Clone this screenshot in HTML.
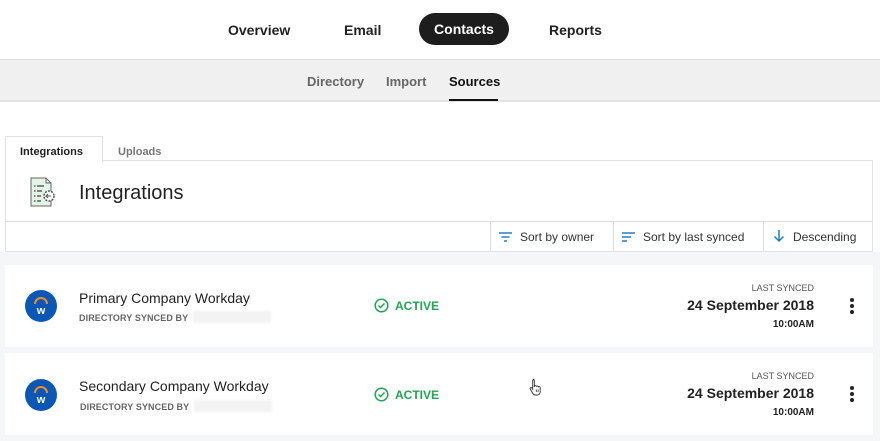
<!DOCTYPE html>
<html><head><meta charset="utf-8"><style>
*{margin:0;padding:0;box-sizing:border-box}
body{width:880px;height:441px;overflow:hidden;background:#f4f6f7;font-family:"Liberation Sans",sans-serif;color:#222;position:relative}
.abs{position:absolute}
.top{left:0;top:0;width:880px;height:60px;background:#fff;border-bottom:1px solid #ddd}
.nav{font-weight:bold;font-size:14px;top:22px}
.pill{left:419px;top:13px;width:90px;height:32px;border-radius:16px;background:#1d1d1d;color:#fff;font-weight:bold;font-size:14px;text-align:center;line-height:32px}
.sub{left:0;top:60px;width:880px;height:42px;background:#f0f0f1;border-bottom:2px solid #e3e3e3}
.sn{top:74px;font-weight:bold;font-size:13px;color:#666}
.white{left:0;top:102px;width:880px;height:150px;background:#fff}
.tab{font-size:11px;font-weight:bold;top:146px}
.panel{left:5px;top:160px;width:868px;height:92px;background:#fff;border:1px solid #e2e2e2;border-top:none}
.tb{font-size:12px;color:#333;top:230px}
.div{top:222px;width:1px;height:29px;background:#ddd}
.row{left:5px;width:868px;height:82px;background:#fff}
.logo{width:32px;height:32px;border-radius:50%;background:#0b57b8}
.name{font-size:14px;color:#222}
.by{font-size:9px;color:#666;font-weight:bold;letter-spacing:0.1px}
.blur{width:78px;height:12px;background:#f3f3f3;filter:blur(1px)}
.act{color:#1fa652;font-weight:bold;font-size:12px}
.ls{font-size:9px;color:#555;right:66px;text-align:right}
.dt{font-size:14px;font-weight:bold;right:66px;text-align:right}
.tm{font-size:10px;font-weight:bold;right:66px;text-align:right}
.dots{width:4px}
.dots i{display:block;width:4px;height:4px;border-radius:2px;background:#222;margin-bottom:2px}
</style></head><body>
<div class="abs top"></div>
<div class="abs nav" style="left:228px">Overview</div>
<div class="abs nav" style="left:344px">Email</div>
<div class="abs pill">Contacts</div>
<div class="abs nav" style="left:549px">Reports</div>
<div class="abs sub"></div>
<div class="abs sn" style="left:307px">Directory</div>
<div class="abs sn" style="left:386px">Import</div>
<div class="abs sn" style="left:449px;color:#111">Sources</div>
<div class="abs" style="left:449px;top:99px;width:49px;height:2px;background:#111"></div>
<div class="abs white"></div>
<div class="abs" style="left:5px;top:136px;width:98px;height:26px;background:#fff;border:1px solid #e2e2e2;border-bottom:none;z-index:2"></div>
<div class="abs tab" style="left:20px;z-index:3">Integrations</div>
<div class="abs tab" style="left:118px;color:#777">Uploads</div>
<div class="abs panel"></div>
<div class="abs" style="left:5px;top:160px;width:868px;height:1px;background:#e2e2e2"></div>
<svg class="abs" style="left:29px;top:176px" width="28" height="32" viewBox="0 0 28 32">
<path d="M2 2h15l5 5v23H2z" fill="#e3f3e6" stroke="#666" stroke-width="1"/>
<path d="M17 2v5h5" fill="none" stroke="#666"/>
<g stroke="#555" stroke-width="1.4"><line x1="5" y1="10" x2="6.5" y2="10"/><line x1="8" y1="10" x2="15" y2="10"/><line x1="5" y1="15" x2="6.5" y2="15"/><line x1="8" y1="15" x2="13" y2="15"/><line x1="5" y1="20" x2="6.5" y2="20"/><line x1="8" y1="20" x2="12" y2="20"/><line x1="5" y1="25" x2="6.5" y2="25"/><line x1="8" y1="25" x2="12" y2="25"/></g>
<circle cx="20" cy="20" r="5" fill="#fff" stroke="#555" stroke-width="1.5" stroke-dasharray="2 1.2"/>
<path d="M22 20h-5l2-2m-2 2l2 2" stroke="#555" fill="none" stroke-width="1"/>
</svg>
<div class="abs" style="left:79px;top:182px;font-size:20px;color:#222">Integrations</div>
<div class="abs" style="left:5px;top:221px;width:868px;height:1px;background:#ddd"></div>
<div class="abs div" style="left:490px"></div>
<div class="abs div" style="left:613px"></div>
<div class="abs div" style="left:763px"></div>
<svg class="abs" style="left:499px;top:231px" width="13" height="11"><g stroke="#1a7fd1" stroke-width="1.5"><line x1="0" y1="2" x2="13" y2="2"/><line x1="2.5" y1="6" x2="10.5" y2="6"/><line x1="5" y1="10" x2="8" y2="10"/></g></svg>
<div class="abs tb" style="left:520px">Sort by owner</div>
<svg class="abs" style="left:622px;top:231px" width="13" height="11"><g stroke="#1a7fd1" stroke-width="1.5"><line x1="0" y1="2" x2="13" y2="2"/><line x1="0" y1="6" x2="9" y2="6"/><line x1="0" y1="10" x2="5" y2="10"/></g></svg>
<div class="abs tb" style="left:643px">Sort by last synced</div>
<svg class="abs" style="left:773px;top:229px" width="12" height="14"><path d="M6 1v11M1.5 7.5L6 12l4.5-4.5" stroke="#1a7fd1" stroke-width="1.5" fill="none"/></svg>
<div class="abs tb" style="left:793px">Descending</div>

<div class="abs row" style="top:265px"></div>
<div class="abs row" style="top:353px"></div>

<div class="abs logo" style="left:25px;top:290px"></div>
<svg class="abs" style="left:25px;top:290px" width="32" height="32"><path d="M10 14a6 6 0 0 1 12 0" stroke="#f08a24" stroke-width="2" fill="none"/><text x="16" y="24" font-family="Liberation Sans" font-weight="bold" font-size="11" fill="#fff" text-anchor="middle">w</text></svg>
<div class="abs name" style="left:79px;top:290px">Primary Company Workday</div>
<div class="abs by" style="left:79px;top:313px">DIRECTORY SYNCED BY</div>
<div class="abs blur" style="left:193px;top:311px"></div>
<svg class="abs" style="left:374px;top:298px" width="15" height="15"><circle cx="7.5" cy="7.5" r="6.3" stroke="#1fa652" stroke-width="1.5" fill="none"/><path d="M4.5 7.5l2 2 4-4" stroke="#1fa652" stroke-width="1.5" fill="none"/></svg>
<div class="abs act" style="left:395px;top:299px">ACTIVE</div>
<div class="abs ls" style="top:283px">LAST SYNCED</div>
<div class="abs dt" style="top:297px">24 September 2018</div>
<div class="abs tm" style="top:319px">10:00AM</div>
<div class="abs dots" style="left:850px;top:298px"><i></i><i></i><i></i></div>

<div class="abs logo" style="left:25px;top:379px"></div>
<svg class="abs" style="left:25px;top:379px" width="32" height="32"><path d="M10 14a6 6 0 0 1 12 0" stroke="#f08a24" stroke-width="2" fill="none"/><text x="16" y="24" font-family="Liberation Sans" font-weight="bold" font-size="11" fill="#fff" text-anchor="middle">w</text></svg>
<div class="abs name" style="left:79px;top:378px">Secondary Company Workday</div>
<div class="abs by" style="left:80px;top:402px">DIRECTORY SYNCED BY</div>
<div class="abs blur" style="left:194px;top:400px"></div>
<svg class="abs" style="left:374px;top:387px" width="15" height="15"><circle cx="7.5" cy="7.5" r="6.3" stroke="#1fa652" stroke-width="1.5" fill="none"/><path d="M4.5 7.5l2 2 4-4" stroke="#1fa652" stroke-width="1.5" fill="none"/></svg>
<div class="abs act" style="left:395px;top:388px">ACTIVE</div>
<div class="abs ls" style="top:371px">LAST SYNCED</div>
<div class="abs dt" style="top:385px">24 September 2018</div>
<div class="abs tm" style="top:407px">10:00AM</div>
<div class="abs dots" style="left:850px;top:386px"><i></i><i></i><i></i></div>
<svg class="abs" style="left:528px;top:378px" width="16" height="18" viewBox="0 0 16 18"><path d="M5 1.5c.8 0 1.3.5 1.3 1.3V9l.4-1.2c.6-.4 1.6-.2 1.8.5.6-.5 1.6-.3 1.9.5.7-.4 1.7-.1 1.8.8v4.2c0 1.8-1.2 3.2-3 3.2H7.3c-1 0-1.8-.6-2.3-1.4L2.2 11c-.4-.6 0-1.4.7-1.4.5 0 .9.3 1.2.7l.6.8V2.8c0-.8.5-1.3 1.3-1.3z" fill="#fff" stroke="#333" stroke-width="0.9"/><path d="M8.3 11.5v2.5M10.1 11.5v2.5" stroke="#333" stroke-width="0.8"/></svg>
</body></html>
